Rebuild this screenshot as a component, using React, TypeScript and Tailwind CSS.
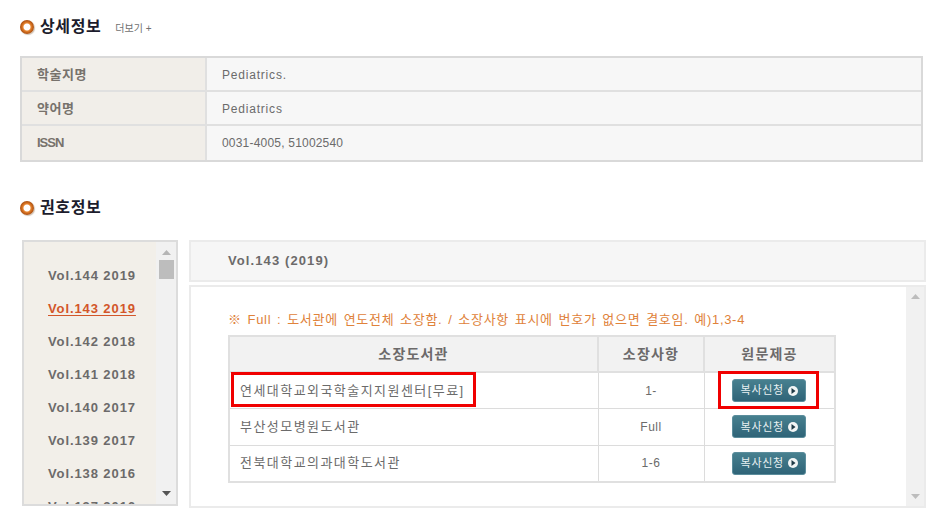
const KR = "font-['Liberation_Sans','Noto_Sans_CJK_KR',sans-serif]";

function Bullet() {
  return (
    <span className="w-[14px] h-[14px] rounded-full shrink-0 bg-[radial-gradient(circle_at_50%_50%,#ffffff_0,#ffffff_3px,#e8862f_4px,#c8651c_5.5px,#a9500f_7px)] shadow-[1px_1px_1px_rgba(120,80,40,0.35)]" />
  );
}

function SectionTitle({ text, more }: { text: string; more?: boolean }) {
  return (
    <div className="flex items-center h-[20px] pl-[20px]">
      <Bullet />
      <h2 className="ml-[6px] text-[16px] leading-[20px] font-bold text-[#1c1c2c] tracking-[0.6px]">{text}</h2>
      {more && <span className="ml-[14px] text-[10px] text-[#707070] leading-[20px] mt-[3px]">더보기 +</span>}
    </div>
  );
}

function Triangle({ up, color }: { up?: boolean; color: string }) {
  return (
    <svg width="9" height="5" viewBox="0 0 9 5" className="block">
      <path d={up ? "M4.5 0L9 5H0Z" : "M0 0H9L4.5 5Z"} fill={color} />
    </svg>
  );
}

const info = [
  { k: "학술지명", v: "Pediatrics.", kc: "tracking-[0.5px]", vc: "tracking-[0.8px]" },
  { k: "약어명", v: "Pediatrics", kc: "tracking-[0.5px]", vc: "tracking-[0.8px]" },
  { k: "ISSN", v: "0031-4005, 51002540", kc: "tracking-[-1px]", vc: "tracking-[0.2px]" },
];

const vols = [
  "Vol.144 2019",
  "Vol.143 2019",
  "Vol.142 2018",
  "Vol.141 2018",
  "Vol.140 2017",
  "Vol.139 2017",
  "Vol.138 2016",
  "Vol.137 2016",
];

function CopyButton() {
  return (
    <button className="w-[74px] h-[23px] rounded-[3px] bg-gradient-to-b from-[#47808f] to-[#2f6478] border border-[#5b8d9c] flex items-center justify-center gap-[4px] text-[11px] text-[#e8f0f2] tracking-[0.7px]">
      <span>복사신청</span>
      <svg width="10" height="10" viewBox="0 0 10 10" className="shrink-0">
        <circle cx="5" cy="5" r="5" fill="#f2f5f5" />
        <path d="M3.5 2L7.5 5L3.5 8Z" fill="#1f3a46" />
      </svg>
    </button>
  );
}

const libs = [
  { name: "연세대학교외국학술지지원센터[무료]", have: "1-", mark: true },
  { name: "부산성모병원도서관", have: "Full", mark: false },
  { name: "전북대학교의과대학도서관", have: "1-6", mark: false },
];

export default function App() {
  return (
    <div className={`w-[945px] h-[523px] overflow-hidden bg-white ${KR}`}>
      <div className="pt-[17px]">
        <SectionTitle text="상세정보" more />
      </div>

      <div className="mt-[19px] ml-[20px] w-[903px] border-2 border-[#d9d9d9]">
        {info.map((r, i) => (
          <div key={r.k} className={`flex h-[34px] ${i < 2 ? "border-b-2 border-[#e0e0e0]" : ""}`}>
            <div className={`w-[185px] shrink-0 bg-[#f1eee9] border-r-2 border-[#e0e0e0] pl-[15px] flex items-center text-[13px] font-bold text-[#77726c] ${i < 2 ? "pt-[2px]" : ""} ${r.kc}`}>
              {r.k}
            </div>
            <div className={`flex-1 bg-[#f7f7f7] pl-[15px] flex items-center text-[12px] text-[#6b6b6b] ${i < 2 ? "pt-[2px]" : ""} ${r.vc}`}>
              {r.v}
            </div>
          </div>
        ))}
      </div>

      <div className="mt-[36px]">
        <SectionTitle text="권호정보" />
      </div>

      <div className="mt-[22px] ml-[22px] flex items-start gap-[11px]">
        <div className="w-[156px] h-[266px] border-2 border-[#dcdcdc] bg-[#f2efe9] flex overflow-hidden">
          <ul className="flex-1 pt-[17px] pl-[24px] overflow-hidden">
            {vols.map((v, i) => (
              <li
                key={v}
                className={`h-[33px] leading-[33px] whitespace-nowrap text-[13px] font-bold tracking-[0.9px] ${
                  i === 1 ? "text-[#d2562a] underline underline-offset-2" : "text-[#6c6a6a]"
                }`}
              >
                {v}
              </li>
            ))}
          </ul>
          <div className="w-[20px] shrink-0 bg-[#f1f1f1] flex flex-col items-center pt-[8px] pb-[8px]">
            <Triangle up color="#b5b5b5" />
            <div className="mt-[5px] w-[15px] h-[19px] bg-[#bdbdbd]" />
            <div className="flex-1" />
            <Triangle color="#555" />
          </div>
        </div>

        <div className="w-[737px] flex flex-col gap-[3px]">
          <div className="h-[42px] border-2 border-[#ebebeb] bg-[#f6f6f6] pl-[37px] flex items-center text-[13px] font-bold text-[#6c6a6a] tracking-[1.1px]">
            Vol.143 (2019)
          </div>
          <div className="h-[223px] border-2 border-[#ebebeb] bg-white flex">
            <div className="flex-1 pl-[37px] pt-[24px]">
              <p className="text-[13px] leading-[18px] text-[#e0823a] tracking-[0.7px] [word-spacing:1.5px] whitespace-nowrap">
                ※ Full : 도서관에 연도전체 소장함. / 소장사항 표시에 번호가 없으면 결호임. 예)1,3-4
              </p>
              <table className="mt-[6px] w-[608px] table-fixed border-collapse border-2 border-[#e0e0e0] text-[13px]">
                <thead>
                  <tr className="h-[36px] bg-[#f2f2f2] text-[#6c6a6a] text-[14px] tracking-[1.2px]">
                    <th className="w-[369px] border-2 border-[#e0e0e0] font-bold">소장도서관</th>
                    <th className="w-[106px] border-2 border-[#e0e0e0] font-bold">소장사항</th>
                    <th className="border-2 border-[#e0e0e0] font-bold">원문제공</th>
                  </tr>
                </thead>
                <tbody>
                  {libs.map((l) => (
                    <tr key={l.name} className="h-[36.5px] text-[#6b6b6b]">
                      <td className="relative border border-[#dcdcdc] pl-[10px] tracking-[1.45px] whitespace-nowrap">
                        {l.name}
                        {l.mark && (
                          <span className="absolute left-[1px] top-[-1px] w-[245px] h-[35px] border-[3px] border-[#f00000]" />
                        )}
                      </td>
                      <td className="border border-[#dcdcdc] text-center text-[12px] tracking-[0.5px]">{l.have}</td>
                      <td className="relative border border-[#dcdcdc]">
                        <div className="flex justify-center">
                          <CopyButton />
                        </div>
                        {l.mark && (
                          <span className="absolute left-[13px] top-[-2px] w-[101px] h-[38px] border-[3px] border-[#f00000]" />
                        )}
                      </td>
                    </tr>
                  ))}
                </tbody>
              </table>
            </div>
            <div className="w-[18px] shrink-0 bg-[#f1f1f1] flex flex-col items-center py-[7px]">
              <Triangle up color="#bdbdbd" />
              <div className="flex-1" />
              <Triangle color="#bdbdbd" />
            </div>
          </div>
        </div>
      </div>
    </div>
  );
}
